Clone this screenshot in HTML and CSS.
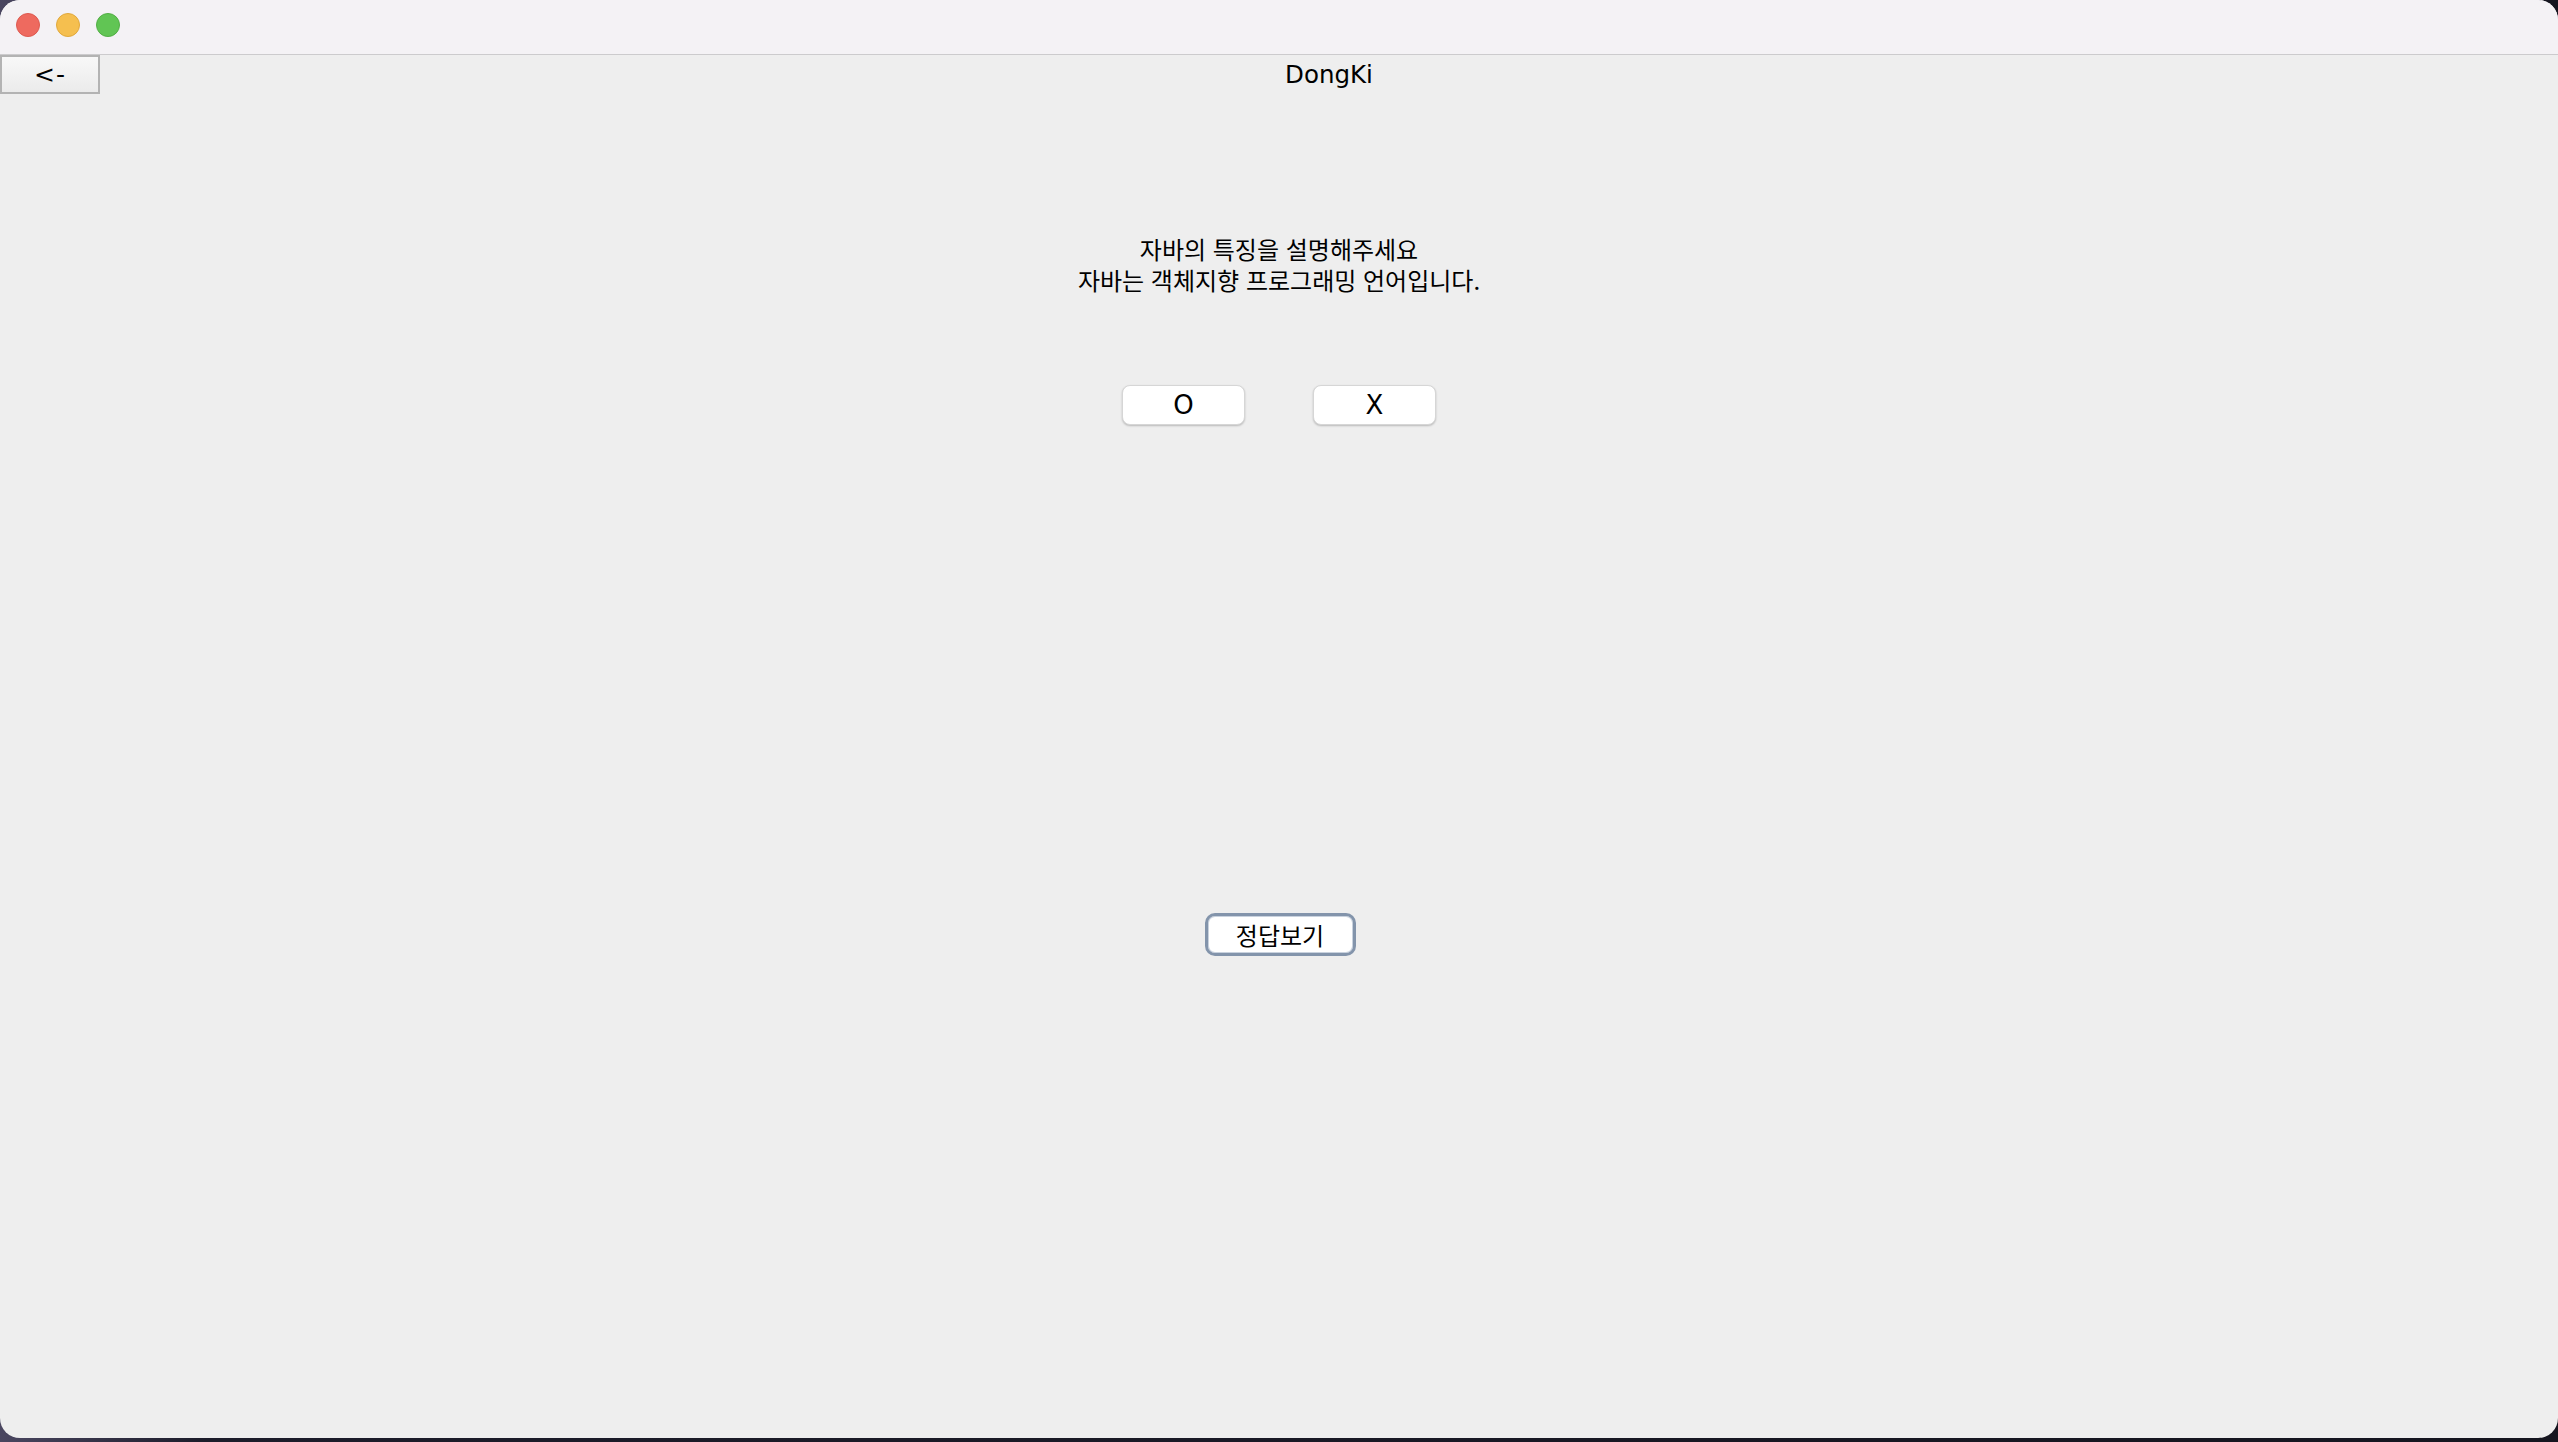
FILE: index.html
```html
<!DOCTYPE html>
<html lang="ko">
<head>
<meta charset="utf-8">
<title>DongKi</title>
<link rel="stylesheet" href="styles.css">
</head>
<body>
<div class="window">
  <div class="titlebar">
    <span class="light red"></span>
    <span class="light yellow"></span>
    <span class="light green"></span>
  </div>
  <div class="toprow">
    <button class="back">&lt;-</button>
    <div class="apptitle">DongKi</div>
  </div>
  <div class="question">
    <div>자바의 특징을 설명해주세요</div>
    <div>자바는 객체지향 프로그래밍 언어입니다.</div>
  </div>
  <div class="choices">
    <button class="choice">O</button>
    <button class="choice">X</button>
  </div>
  <div class="answer-row">
    <button class="answer">정답보기</button>
  </div>
</div>
</body>
</html>
```

FILE: styles.css
```css
html, body {
  margin: 0;
  padding: 0;
}
body {
  width: 2558px;
  height: 1442px;
  background: linear-gradient(90deg, #4a4660 0%, #1c1c2a 8%, #15151f 100%);
  overflow: hidden;
}
.window {
  width: 2558px;
  height: 1438px;
  border-radius: 20px;
  overflow: hidden;
  background: #eeeeee;
  display: flex;
  flex-direction: column;
}
.titlebar {
  height: 55px;
  background: #f4f2f5;
  border-bottom: 1px solid #cccbcd;
  display: flex;
  align-items: flex-start;
  gap: 16px;
  padding: 13px 0 0 16px;
  box-sizing: border-box;
}
.light {
  width: 24px;
  height: 24px;
  border-radius: 50%;
  box-sizing: border-box;
}
.red { background: #ee6a5f; border: 1px solid #dd5a50; }
.yellow { background: #f5bf4f; border: 1px solid #e0a83c; }
.green { background: #61c554; border: 1px solid #52ae45; }

.toprow {
  display: flex;
  height: 39px;
  align-items: flex-start;
}
.back {
  width: 100px;
  height: 39px;
  border: 2px solid #b3b3b3;
  background: linear-gradient(#f8f8f8, #ebebeb);
  font-family: "DejaVu Sans", sans-serif;
  font-size: 25px;
  color: #000;
  padding: 0;
  box-sizing: border-box;
  line-height: 33px;
  letter-spacing: 1px;
}
.apptitle {
  flex: 1;
  text-align: center;
  font-family: "DejaVu Sans", sans-serif;
  font-size: 24.5px;
  line-height: 40px;
  color: #000;
}
.question {
  margin-top: 139px;
  text-align: center;
  font-family: "Noto Sans CJK KR", "Noto Sans", sans-serif;
  font-size: 24px;
  line-height: 31px;
  color: #000;
}
.choices {
  margin-top: 90px;
  display: flex;
  justify-content: center;
  gap: 68px;
}
.choice {
  width: 123px;
  height: 40px;
  border: 1px solid #d6d6d6;
  border-radius: 8px;
  background: #ffffff;
  box-shadow: 0 1px 2px rgba(0, 0, 0, 0.22);
  font-family: "DejaVu Sans", sans-serif;
  font-size: 26px;
  color: #000;
  padding: 0;
  box-sizing: border-box;
}
.answer-row {
  margin-top: 488px;
  display: flex;
  justify-content: center;
  padding-left: 2px;
}
.answer {
  width: 151px;
  height: 43px;
  border: 3px solid #8394ab;
  border-radius: 10px;
  background: #ffffff;
  box-shadow: inset 0 0 0 1px #c9d2de;
  font-family: "Noto Sans CJK KR", "Noto Sans", sans-serif;
  font-size: 24px;
  color: #000;
  padding: 0;
  box-sizing: border-box;
  line-height: 36px;
}
```
